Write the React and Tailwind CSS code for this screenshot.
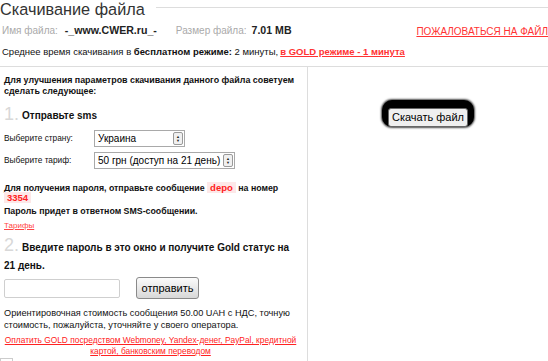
import React from "react";

function FakeSelect({ value, width }) {
  return (
    <div className={`flex items-center h-[17px] border border-[#a9a9a9] bg-white ${width}`}>
      <span className="flex-1 pl-[3px] text-[10px] text-black leading-none whitespace-nowrap overflow-hidden">{value}</span>
      <span className="flex flex-col items-center justify-center w-[10px] h-[13px] mr-[1px] border border-[#9a9a9a] rounded-[2px] bg-[#f0f0f0] text-[4px] leading-[4px] text-[#222]">
        <span>▲</span>
        <span>▼</span>
      </span>
    </div>
  );
}

export default function App() {
  return (
    <div className="w-[548px] h-[361px] overflow-hidden bg-white text-[#111] font-['Liberation_Sans',Arial,sans-serif]">
      <div className="flex items-start h-[21px]">
        <h1 className="text-[16.3px] leading-[19px] text-[#333] whitespace-nowrap">Скачивание файла</h1>
        <div className="flex-1 mt-[7px] ml-[11px] border-t border-[#ddd]"></div>
      </div>
      <div className="flex items-center h-[20px] pl-[2px] text-[10px] whitespace-nowrap">
        <div className="flex items-center w-[429px]">
          <span className="text-[#aaa]">Имя файла:</span>
          <span className="ml-[7px] font-bold text-[10.6px] text-[#222]">-_www.CWER.ru_-</span>
          <span className="ml-[19px] text-[#aaa]">Размер файла:</span>
          <span className="ml-[5px] font-bold text-[10.6px] text-[#222]">7.01 MB</span>
        </div>
        <a className="text-[#f33] underline">ПОЖАЛОВАТЬСЯ НА ФАЙЛ</a>
      </div>
      <div className="flex items-center h-[22px] pl-[2px] text-[9.5px] whitespace-nowrap">
        <span>Среднее время скачивания в <b>бесплатном режиме:</b> 2 минуты, </span>
        <a className="ml-[2px] font-bold text-[#f33] underline">в GOLD режиме - 1 минута</a>
      </div>
      <div className="mt-[3px] border-t border-[#ddd]"></div>
      <div className="flex h-[300px]">
        <div className="w-[308px] border-r border-[#ddd] pl-[4px] pr-[10px] pt-[8px]">
          <p className="font-bold text-[8.9px] leading-[11px]">Для улучшения параметров скачивания данного файла советуем сделать следующее:</p>
          <div className="flex items-end h-[16px] mt-[9px]">
            <span className="text-[18px] text-[#d8d8d8] leading-[16px]">1.</span>
            <span className="ml-[3px] font-bold text-[10px] leading-[12px]">Отправьте sms</span>
          </div>
          <div className="flex items-center mt-[8px]">
            <span className="w-[90px] text-[8.3px]">Выберите страну:</span>
            <FakeSelect value="Украина" width="w-[91px]" />
          </div>
          <div className="flex items-center mt-[5px]">
            <span className="w-[90px] text-[8.3px]">Выберите тариф:</span>
            <FakeSelect value="50 грн (доступ на 21 день)" width="w-[141px]" />
          </div>
          <p className="mt-[14px] font-bold text-[8.8px] leading-[10px]">
            Для получения пароля, отправьте сообщение <span className="px-[3px] bg-[#fde8e8] text-[#f22] text-[9.5px]">depo</span> на номер <span className="px-[3px] bg-[#fde8e8] text-[#f22] text-[9.5px]">3354</span>
          </p>
          <p className="mt-[3px] font-bold text-[8.8px] leading-[10px]">Пароль придет в ответном SMS-сообщении.</p>
          <a className="block mt-[5px] text-[8px] text-[#f44] underline leading-[10px]">Тарифы</a>
          <div className="mt-[8px] text-[10px] leading-[18px]">
            <span className="text-[18px] leading-[10px] text-[#d8d8d8]">2.</span>
            <span className="ml-[3px] font-bold">Введите пароль в это окно и получите Gold статус на 21 день.</span>
          </div>
          <div className="flex items-center mt-[2px] h-[22px]">
            <div className="w-[116px] h-[19px] border border-[#cfcfcf] rounded-[2px] bg-white"></div>
            <button className="ml-[16px] w-[63px] h-[22px] border border-[#8a8a8a] rounded-[3px] bg-gradient-to-b from-[#fbfbfb] to-[#d8d8d8] text-[11px] text-black leading-none">отправить</button>
          </div>
          <p className="mt-[8px] text-[9.2px] leading-[12px]">Ориентировочная стоимость сообщения 50.00 UAH с НДС, точную стоимость, пожалуйста, уточняйте у своего оператора.</p>
          <p className="mt-[4px] text-center text-[8.4px] leading-[11px]">
            <a className="text-[#f22] underline">Оплатить GOLD посредством Webmoney, Yandex-денег, PayPal, кредитной картой, банковским переводом</a>
          </p>
          <div className="mt-[1px] ml-[-4px] w-[13px] h-[6px] border border-[#ccc]"></div>
        </div>
        <div className="flex-1 flex justify-center pt-[33px]">
          <div className="h-[27px] px-[6px] py-[4px] rounded-[10px] bg-black shadow-[0_0_2px_1px_rgba(0,0,0,0.7)]">
            <button className="h-[19px] px-[3px] rounded-[3px] border border-[#666] bg-[#efefef] text-[11px] text-black leading-none whitespace-nowrap">Скачать файл</button>
          </div>
        </div>
      </div>
    </div>
  );
}
